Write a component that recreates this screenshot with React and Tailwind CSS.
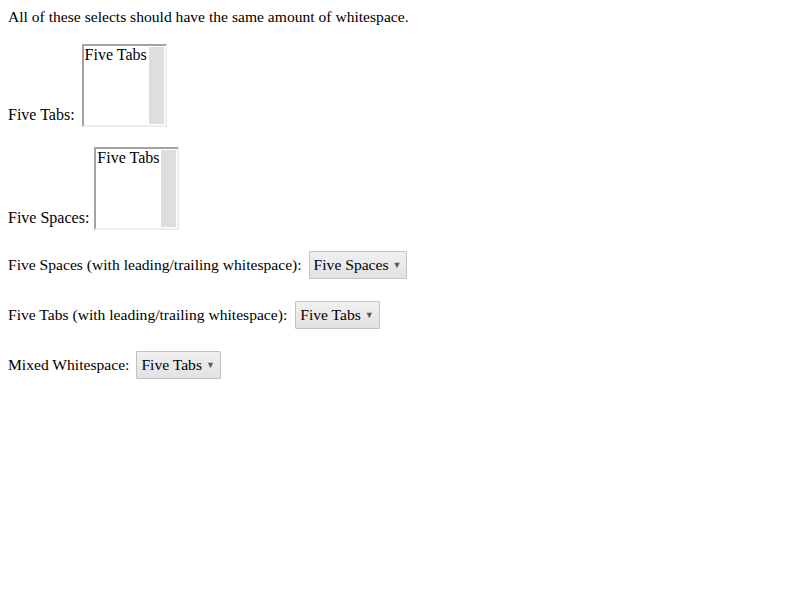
export default function App() {
  const listbox = (
    <div className="relative w-[85px] h-[83px] bg-white text-[16px] border-2 border-t-[#a3a3a3] border-l-[#a3a3a3] border-r-[#ededed] border-b-[#ededed]">
      <div className="pl-[1px] pt-[0px] leading-[18px] whitespace-nowrap">Five Tabs</div>
      <div className="absolute right-[1px] top-[1px] bottom-[1px] w-[15px] bg-[#dedede]" />
    </div>
  )

  const dropdown = (label) => (
    <div className="flex items-center h-[28px] pl-[4px] pr-[5px] border border-[#c3c3c3] rounded-[1px] bg-gradient-to-b from-[#f0f0f0] to-[#e2e2e2] leading-[18px]">
      <span>{label}</span>
      <span className="ml-[4px] text-[9px] text-[#5a5a5a]">▼</span>
    </div>
  )

  return (
    <div className="px-[8px] pt-[8px] text-[15.6px] text-black font-['Liberation_Serif',serif]">
      <div className="h-[18px] leading-[18px]">All of these selects should have the same amount of whitespace.</div>

      <div className="flex items-end gap-[7px] mt-[18px]">
        <span className="leading-[18px] pb-[3px] text-[16px]">Five Tabs:</span>
        {listbox}
      </div>

      <div className="flex items-end gap-[5px] mt-[20px]">
        <span className="leading-[18px] pb-[3px] text-[16px]">Five Spaces:</span>
        {listbox}
      </div>

      <div className="flex items-center gap-[7px] mt-[21px]">
        <span className="leading-[18px]">Five Spaces (with leading/trailing whitespace):</span>
        {dropdown('Five Spaces')}
      </div>

      <div className="flex items-center gap-[8px] mt-[22px]">
        <span className="leading-[18px]">Five Tabs (with leading/trailing whitespace):</span>
        {dropdown('Five Tabs')}
      </div>

      <div className="flex items-center gap-[7px] mt-[22px]">
        <span className="leading-[18px]">Mixed Whitespace:</span>
        {dropdown('Five Tabs')}
      </div>
    </div>
  )
}
